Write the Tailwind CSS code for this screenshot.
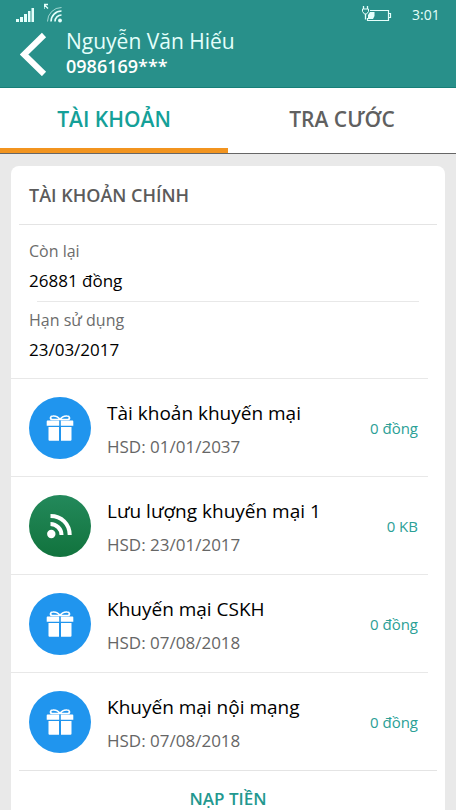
<!DOCTYPE html>
<html lang="vi">
<head>
<meta charset="utf-8">
<meta name="viewport" content="width=device-width, initial-scale=1">
<title>Tài khoản</title>
<script src="https://cdn.jsdelivr.net/npm/@tailwindcss/browser@4"></script>
</head>
<body class="flex h-dvh flex-col overflow-hidden bg-[#e9e9e9] font-['Open_Sans','Noto_Sans',sans-serif] text-black">
<svg class="hidden" aria-hidden="true">
  <symbol id="gift" viewBox="0 0 28 28">
    <path d="M14 5.500C12.500 3.200 10 1.800 7 2C4 2.100 3.800 5 6 5.500ZM14 5.500C15.500 3.200 18 1.800 21 2C24 2.100 24.200 5 22 5.500Z" fill="none" stroke="#fff" stroke-width="1.700"/>
    <path d="M1.500 6.500H13.200V11.700H.7V7.500Q.7 6.500 1.500 6.500ZM14.800 6.500H26.500Q27.300 6.500 27.300 7.500V11.700H14.800ZM2.500 13H13V26.700H3.500Q2.500 26.700 2.500 25.700ZM15 13H25.500V25.700Q25.500 26.700 24.500 26.700H15Z" fill="#fff"/>
  </symbol>
</svg>

<header class="shrink-0 border-b border-[#177f78] bg-[#28908a] text-[#e4fffb]">
  <div class="flex h-7 items-center pr-4 pl-4">
    <svg class="mr-2 h-7 w-5" viewBox="0 0 20 28" fill="currentColor" aria-hidden="true"><path d="M0 19h3v3H0zM4 17h3v5H4zM8 14h3v8H8zM12 11h2.500v11H12zM15.500 8H18v14h-2.500z"/></svg>
    <svg class="h-7 w-5" viewBox="0 0 20 28" fill="none" stroke="currentColor" aria-hidden="true"><path d="M0 9V4.500H4M0 4.500L4 8.500" stroke-width="1.300"/><path d="M3.500 21.500A14 14 0 0 1 17.500 7.500" opacity=".65"/><path d="M7 21.500A10.500 10.500 0 0 1 17.500 11M11 21.500A6.500 6.500 0 0 1 17.500 15" stroke-width="1.600"/><circle cx="16" cy="20.500" r="1.900" fill="currentColor" stroke="none"/></svg>
    <svg class="ml-auto h-7 w-8" viewBox="0 0 32 28" fill="none" stroke="currentColor" aria-hidden="true"><path d="M10 10.500H28.500V20.500H7.500V18M29 13.500h1.500v4H29" stroke-width="1.200"/><path d="M3.500 6V9M7.500 6V9M5.500 14V19.500" stroke-width="1.300"/><path d="M2.500 9h6v2.500l-2 2.500h-2l-2-2.500z"/><path d="M8 19V15L10 12H14.500V16L13 19Z" fill="currentColor" stroke="none"/></svg>
    <time class="ml-5 w-7 pt-[2px] text-sm whitespace-nowrap">3:01</time>
  </div>
  <div class="flex h-[59px] items-start">
    <button type="button" aria-label="Quay lại" class="ml-5 w-[46px]"><svg class="h-12 w-7" viewBox="0 0 28 48" fill="none" stroke="#fff" stroke-width="6" aria-hidden="true"><path d="M24 7L4 26.500L24 46"/></svg></button>
    <div>
      <h1 class="text-[21px] leading-[26px]">Nguyễn Văn Hiếu</h1>
      <p class="text-[18px] leading-6 font-semibold text-white">0986169***</p>
    </div>
  </div>
</header>

<nav class="grid h-[66px] shrink-0 grid-cols-2 border-b border-[#666] bg-white text-[21px] font-semibold" aria-label="Mục">
  <a href="#tai-khoan" aria-current="page" class="flex items-center justify-center border-b-5 border-[#f2941f] pt-1 text-[#14a098]">TÀI KHOẢN</a>
  <a href="#tra-cuoc" class="flex items-center justify-center border-b-5 border-white pt-1 text-[#606060]">TRA CƯỚC</a>
</nav>

<main id="tai-khoan" class="min-h-0 flex-1 overflow-hidden pt-3 pr-[11px] pl-[11px]">
  <section class="min-h-full rounded-t-lg bg-white">
    <h2 class="mx-2 flex h-[59px] items-center border-b border-[#e4e4e4] pl-[10px] text-[18px] font-semibold text-[#5b5b5b]">TÀI KHOẢN CHÍNH</h2>
    <dl>
      <div class="h-[76px] pt-[11px] pl-[18px]">
        <dt class="text-[16px] leading-[30px] text-[#6c6c6c]">Còn lại</dt>
        <dd class="text-[17px] leading-[30px]">26881 đồng</dd>
      </div>
      <div class="mr-[26px] ml-[26px] border-t border-[#e8e8e8]"></div>
      <div class="h-[76px] pt-[3px] pl-[18px]">
        <dt class="text-[16px] leading-[30px] text-[#6c6c6c]">Hạn sử dụng</dt>
        <dd class="text-[17px] leading-[30px]">23/03/2017</dd>
      </div>
    </dl>
    <ul>
      <li class="mr-[17px] flex h-[98px] items-center border-t border-[#e8e8e8] pr-[10px] pl-[18px]">
        <span class="mr-4 flex size-[62px] shrink-0 items-center justify-center rounded-full bg-[#2095ee]"><svg class="size-7" aria-hidden="true"><use href="#gift"/></svg></span>
        <div class="flex-1 pt-1"><h3 class="text-[19px] leading-[34px]">Tài khoản khuyến mại</h3><p class="text-[17px] leading-[34px] text-[#666]">HSD: 01/01/2037</p></div>
        <span class="pt-[2px] text-[15px] text-[#2ba096]">0 đồng</span>
      </li>
      <li class="mr-[17px] flex h-[98px] items-center border-t border-[#e8e8e8] pr-[10px] pl-[18px]">
        <span class="mr-4 flex size-[62px] shrink-0 items-center justify-center rounded-full bg-linear-to-b from-[#23895b] to-[#11733d]"><svg class="size-7" viewBox="0 0 28 28" fill="none" stroke="#fff" stroke-width="4" aria-hidden="true"><circle cx="5.300" cy="22" r="4.200" fill="#fff" stroke="none"/><path d="M4.500 12C10.500 12 15.500 17 15.500 23M4.500 4C15.500 4 23.700 12 23.700 23"/></svg></span>
        <div class="flex-1 pt-1"><h3 class="text-[19px] leading-[34px]">Lưu lượng khuyến mại 1</h3><p class="text-[17px] leading-[34px] text-[#666]">HSD: 23/01/2017</p></div>
        <span class="pt-[2px] text-[15px] text-[#2ba096]">0 KB</span>
      </li>
      <li class="mr-[17px] flex h-[98px] items-center border-t border-[#e8e8e8] pr-[10px] pl-[18px]">
        <span class="mr-4 flex size-[62px] shrink-0 items-center justify-center rounded-full bg-[#2095ee]"><svg class="size-7" aria-hidden="true"><use href="#gift"/></svg></span>
        <div class="flex-1 pt-1"><h3 class="text-[19px] leading-[34px]">Khuyến mại CSKH</h3><p class="text-[17px] leading-[34px] text-[#666]">HSD: 07/08/2018</p></div>
        <span class="pt-[2px] text-[15px] text-[#2ba096]">0 đồng</span>
      </li>
      <li class="mr-[17px] flex h-[98px] items-center border-t border-[#e8e8e8] pr-[10px] pl-[18px]">
        <span class="mr-4 flex size-[62px] shrink-0 items-center justify-center rounded-full bg-[#2095ee]"><svg class="size-7" aria-hidden="true"><use href="#gift"/></svg></span>
        <div class="flex-1 pt-1"><h3 class="text-[19px] leading-[34px]">Khuyến mại nội mạng</h3><p class="text-[17px] leading-[34px] text-[#666]">HSD: 07/08/2018</p></div>
        <span class="pt-[2px] text-[15px] text-[#2ba096]">0 đồng</span>
      </li>
    </ul>
    <div class="mx-2 border-t border-[#e4e4e4]">
      <button type="button" class="block w-full pt-[18px] text-[17px] leading-5 font-semibold text-[#23988f]">NẠP TIỀN</button>
    </div>
  </section>
</main>
</body>
</html>
